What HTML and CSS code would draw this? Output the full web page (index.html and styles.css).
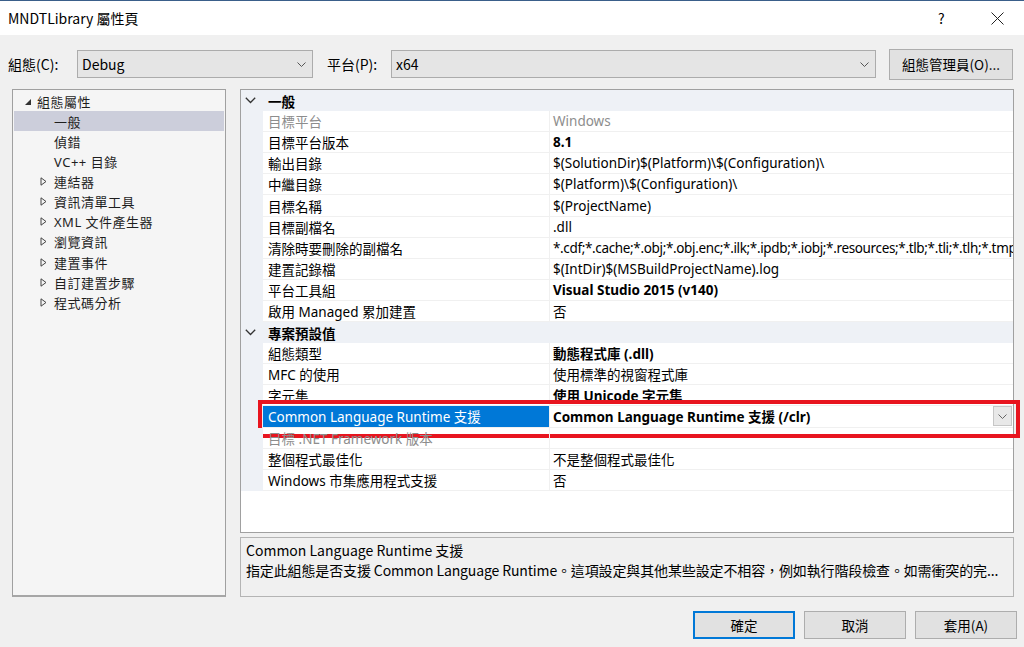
FILE: index.html
```html
<!DOCTYPE html>
<html lang="zh-Hant">
<head>
<meta charset="utf-8">
<title>MNDTLibrary 屬性頁</title>
<link rel="stylesheet" href="styles.css">
</head>
<body>
<div class="dialog">
  <div class="titlebar">
    <span class="title">MNDTLibrary 屬性頁</span>
    <span class="help">?</span>
    <span class="close"><svg width="13" height="13" viewBox="0 0 13 13"><path d="M0.5 0.5 L12.5 12.5 M12.5 0.5 L0.5 12.5" stroke="#222" stroke-width="1" fill="none"/></svg></span>
  </div>
  <div class="toolbar">
    <span class="lbl">組態(C):</span>
    <div class="combo combo-cfg"><span>Debug</span><svg class="chev" width="9" height="5" viewBox="0 0 9 5"><path d="M0.5 0.5 L4.5 4.5 L8.5 0.5" stroke="#555" fill="none"/></svg></div>
    <span class="lbl lbl-plat">平台(P):</span>
    <div class="combo combo-plat"><span>x64</span><svg class="chev" width="9" height="5" viewBox="0 0 9 5"><path d="M0.5 0.5 L4.5 4.5 L8.5 0.5" stroke="#555" fill="none"/></svg></div>
    <div class="btn btn-mgr">組態管理員(O)...</div>
  </div>
  <div class="main">
    <div class="tree">
      <div class="titem root"><span class="tarrow"><svg width="8" height="8" viewBox="0 0 8 8"><path d="M7 1 L7 7 L1 7 Z" fill="#333"/></svg></span>組態屬性</div>
      <div class="titem leaf sel">一般</div>
      <div class="titem leaf">偵錯</div>
      <div class="titem leaf">VC++ 目錄</div>
      <div class="titem node"><span class="tarrow"><svg width="7" height="9" viewBox="0 0 7 9"><path d="M1 0.8 L6 4.5 L1 8.2 Z" stroke="#444" fill="none"/></svg></span>連結器</div>
      <div class="titem node"><span class="tarrow"><svg width="7" height="9" viewBox="0 0 7 9"><path d="M1 0.8 L6 4.5 L1 8.2 Z" stroke="#444" fill="none"/></svg></span>資訊清單工具</div>
      <div class="titem node"><span class="tarrow"><svg width="7" height="9" viewBox="0 0 7 9"><path d="M1 0.8 L6 4.5 L1 8.2 Z" stroke="#444" fill="none"/></svg></span>XML 文件產生器</div>
      <div class="titem node"><span class="tarrow"><svg width="7" height="9" viewBox="0 0 7 9"><path d="M1 0.8 L6 4.5 L1 8.2 Z" stroke="#444" fill="none"/></svg></span>瀏覽資訊</div>
      <div class="titem node"><span class="tarrow"><svg width="7" height="9" viewBox="0 0 7 9"><path d="M1 0.8 L6 4.5 L1 8.2 Z" stroke="#444" fill="none"/></svg></span>建置事件</div>
      <div class="titem node"><span class="tarrow"><svg width="7" height="9" viewBox="0 0 7 9"><path d="M1 0.8 L6 4.5 L1 8.2 Z" stroke="#444" fill="none"/></svg></span>自訂建置步驟</div>
      <div class="titem node"><span class="tarrow"><svg width="7" height="9" viewBox="0 0 7 9"><path d="M1 0.8 L6 4.5 L1 8.2 Z" stroke="#444" fill="none"/></svg></span>程式碼分析</div>
    </div>
    <div class="rightcol">
      <div class="grid">
        <div class="cat"><span class="cchev"><svg width="11" height="7" viewBox="0 0 11 7"><path d="M0.8 0.8 L5.5 5.5 L10.2 0.8" stroke="#333" stroke-width="1.3" fill="none"/></svg></span>一般</div>
        <div class="row dis"><div class="name">目標平台</div><div class="val">Windows</div></div>
        <div class="row"><div class="name">目標平台版本</div><div class="val b">8.1</div></div>
        <div class="row"><div class="name">輸出目錄</div><div class="val">$(SolutionDir)$(Platform)\$(Configuration)\</div></div>
        <div class="row"><div class="name">中繼目錄</div><div class="val">$(Platform)\$(Configuration)\</div></div>
        <div class="row"><div class="name">目標名稱</div><div class="val">$(ProjectName)</div></div>
        <div class="row"><div class="name">目標副檔名</div><div class="val">.dll</div></div>
        <div class="row"><div class="name">清除時要刪除的副檔名</div><div class="val tight">*.cdf;*.cache;*.obj;*.obj.enc;*.ilk;*.ipdb;*.iobj;*.resources;*.tlb;*.tli;*.tlh;*.tmp</div></div>
        <div class="row"><div class="name">建置記錄檔</div><div class="val">$(IntDir)$(MSBuildProjectName).log</div></div>
        <div class="row"><div class="name">平台工具組</div><div class="val b">Visual Studio 2015 (v140)</div></div>
        <div class="row"><div class="name">啟用 Managed 累加建置</div><div class="val">否</div></div>
        <div class="cat"><span class="cchev"><svg width="11" height="7" viewBox="0 0 11 7"><path d="M0.8 0.8 L5.5 5.5 L10.2 0.8" stroke="#333" stroke-width="1.3" fill="none"/></svg></span>專案預設值</div>
        <div class="row"><div class="name">組態類型</div><div class="val b">動態程式庫 (.dll)</div></div>
        <div class="row"><div class="name">MFC 的使用</div><div class="val">使用標準的視窗程式庫</div></div>
        <div class="row"><div class="name">字元集</div><div class="val b">使用 Unicode 字元集</div></div>
        <div class="row selrow"><div class="name">Common Language Runtime 支援</div><div class="val b">Common Language Runtime 支援 (/clr)<span class="ddbtn"><svg width="9" height="5" viewBox="0 0 9 5"><path d="M0.5 0.5 L4.5 4.5 L8.5 0.5" stroke="#666" fill="none"/></svg></span></div><div class="redbox"></div></div>
        <div class="row dis"><div class="name">目標 .NET Framework 版本</div><div class="val"></div></div>
        <div class="row"><div class="name">整個程式最佳化</div><div class="val">不是整個程式最佳化</div></div>
        <div class="row"><div class="name">Windows 市集應用程式支援</div><div class="val">否</div></div>
      </div>
      <div class="desc">
        <div class="dtitle">Common Language Runtime 支援</div>
        <div class="dtext">指定此組態是否支援 Common Language Runtime。這項設定與其他某些設定不相容，例如執行階段檢查。如需衝突的完...</div>
      </div>
    </div>
  </div>
  <div class="footer">
    <div class="btn fbtn primary">確定</div>
    <div class="btn fbtn">取消</div>
    <div class="btn fbtn">套用(A)</div>
  </div>
</div>
</body>
</html>
```
FILE: styles.css
```css
* { box-sizing: border-box; }
html, body { margin: 0; padding: 0; }
body {
  width: 1024px;
  height: 647px;
  overflow: hidden;
  background: #f0f0f0;
  font-family: "Noto Sans CJK TC", sans-serif;
  color: #000;
}
.dialog { display: flex; flex-direction: column; height: 647px; }
.titlebar {
  height: 35px;
  background: #fff;
  border-top: 1px solid #3a5f8a;
  display: flex;
  align-items: center;
  padding-left: 8px;
  font-size: 14px;
}
.title { flex: 1; }
.help { width: 53px; font-size: 14px; }
.close { width: 33px; display: flex; align-items: center; }
.toolbar {
  height: 54px;
  display: flex;
  align-items: center;
  padding: 4px 0 0 8px;
  font-size: 14px;
}
.lbl { width: 69px; }
.lbl-plat { width: 64px; margin-left: 14px; }
.combo {
  height: 28px;
  background: #e5e5e5;
  border: 1px solid #acacac;
  display: flex;
  align-items: center;
  justify-content: space-between;
  padding: 0 6px 0 4px;
}
.combo-cfg { width: 236px; }
.combo-plat { width: 485px; }
.btn {
  background: #e1e1e1;
  border: 1px solid #adadad;
  display: flex;
  align-items: center;
  justify-content: center;
  font-size: 13.5px;
}
.btn-mgr { width: 124px; height: 31px; margin-left: 13px; }
.main {
  height: 508px;
  display: flex;
  padding-left: 12px;
}
.tree {
  width: 214px;
  height: 508px;
  background: #f5f5f5;
  border: 1px solid #a0a0a0;
  border-bottom: 2px solid #a6a6a6;
  padding: 1px 1px 0 1px;
  font-family: "Noto Sans", "Noto Sans CJK TC", sans-serif;
  font-size: 13px;
  letter-spacing: 0.5px;
}
.titem {
  height: 20.13px;
  display: flex;
  align-items: center;
  white-space: nowrap;
  color: #1e1e1e;
}
.titem.root { padding-left: 10px; }
.titem.root .tarrow { width: 13px; }
.titem.leaf { padding-left: 40px; }
.titem.node { padding-left: 26px; }
.titem.node .tarrow { width: 14px; display: flex; align-items: center; }
.titem.sel { background: #cccedb; }
.rightcol {
  width: 774px;
  margin-left: 14px;
  display: flex;
  flex-direction: column;
  gap: 4px;
}
.grid {
  height: 444px;
  background: #fff;
  border: 1px solid #a0a0a0;
  font-family: "Noto Sans", "Noto Sans CJK TC", sans-serif;
  font-size: 13.5px;
}
.cat {
  height: 21.1px;
  background: #eef1f6;
  display: flex;
  align-items: center;
  font-weight: bold;
  white-space: nowrap;
}
.cchev { width: 27px; padding-left: 4px; display: flex; align-items: center; }
.row {
  height: 21.1px;
  display: flex;
  border-left: 22px solid #eef1f6;
  position: relative;
}
.name, .val {
  white-space: nowrap;
  overflow: hidden;
  display: flex;
  align-items: center;
  border-bottom: 1px solid #f0f0f0;
}
.name { width: 287px; padding-left: 5px; border-right: 1px solid #f0f0f0; }
.val { flex: 1; padding-left: 3px; }
.val.tight { letter-spacing: -0.35px; }
.b { font-weight: bold; }
.dis .name, .dis .val { color: #8d8d8d; }
.selrow .name { background: #0078d7; color: #fff; }
.selrow .val { justify-content: space-between; padding-right: 1px; }
.ddbtn {
  width: 19px;
  height: 20px;
  background: #e8e8e8;
  border: 1px solid #c6c6c6;
  display: flex;
  align-items: center;
  justify-content: center;
}
.redbox {
  position: absolute;
  left: -5px;
  top: -6px;
  width: 762px;
  height: 38px;
  border: 4px solid #e8151f;
  pointer-events: none;
}
.desc {
  height: 60px;
  border: 1px solid #b4b4b4;
  background: #f0f0f0;
  padding: 2px 5px;
  font-size: 14px;
  line-height: 20px;
  white-space: nowrap;
  overflow: hidden;
}
.dtext { letter-spacing: -0.13px; }
.footer {
  height: 50px;
  display: flex;
  justify-content: flex-end;
  gap: 9px;
  padding: 14px 7px 0 0;
}
.fbtn { width: 102px; height: 28px; }
.fbtn.primary { border: 2px solid #0078d7; }
```
